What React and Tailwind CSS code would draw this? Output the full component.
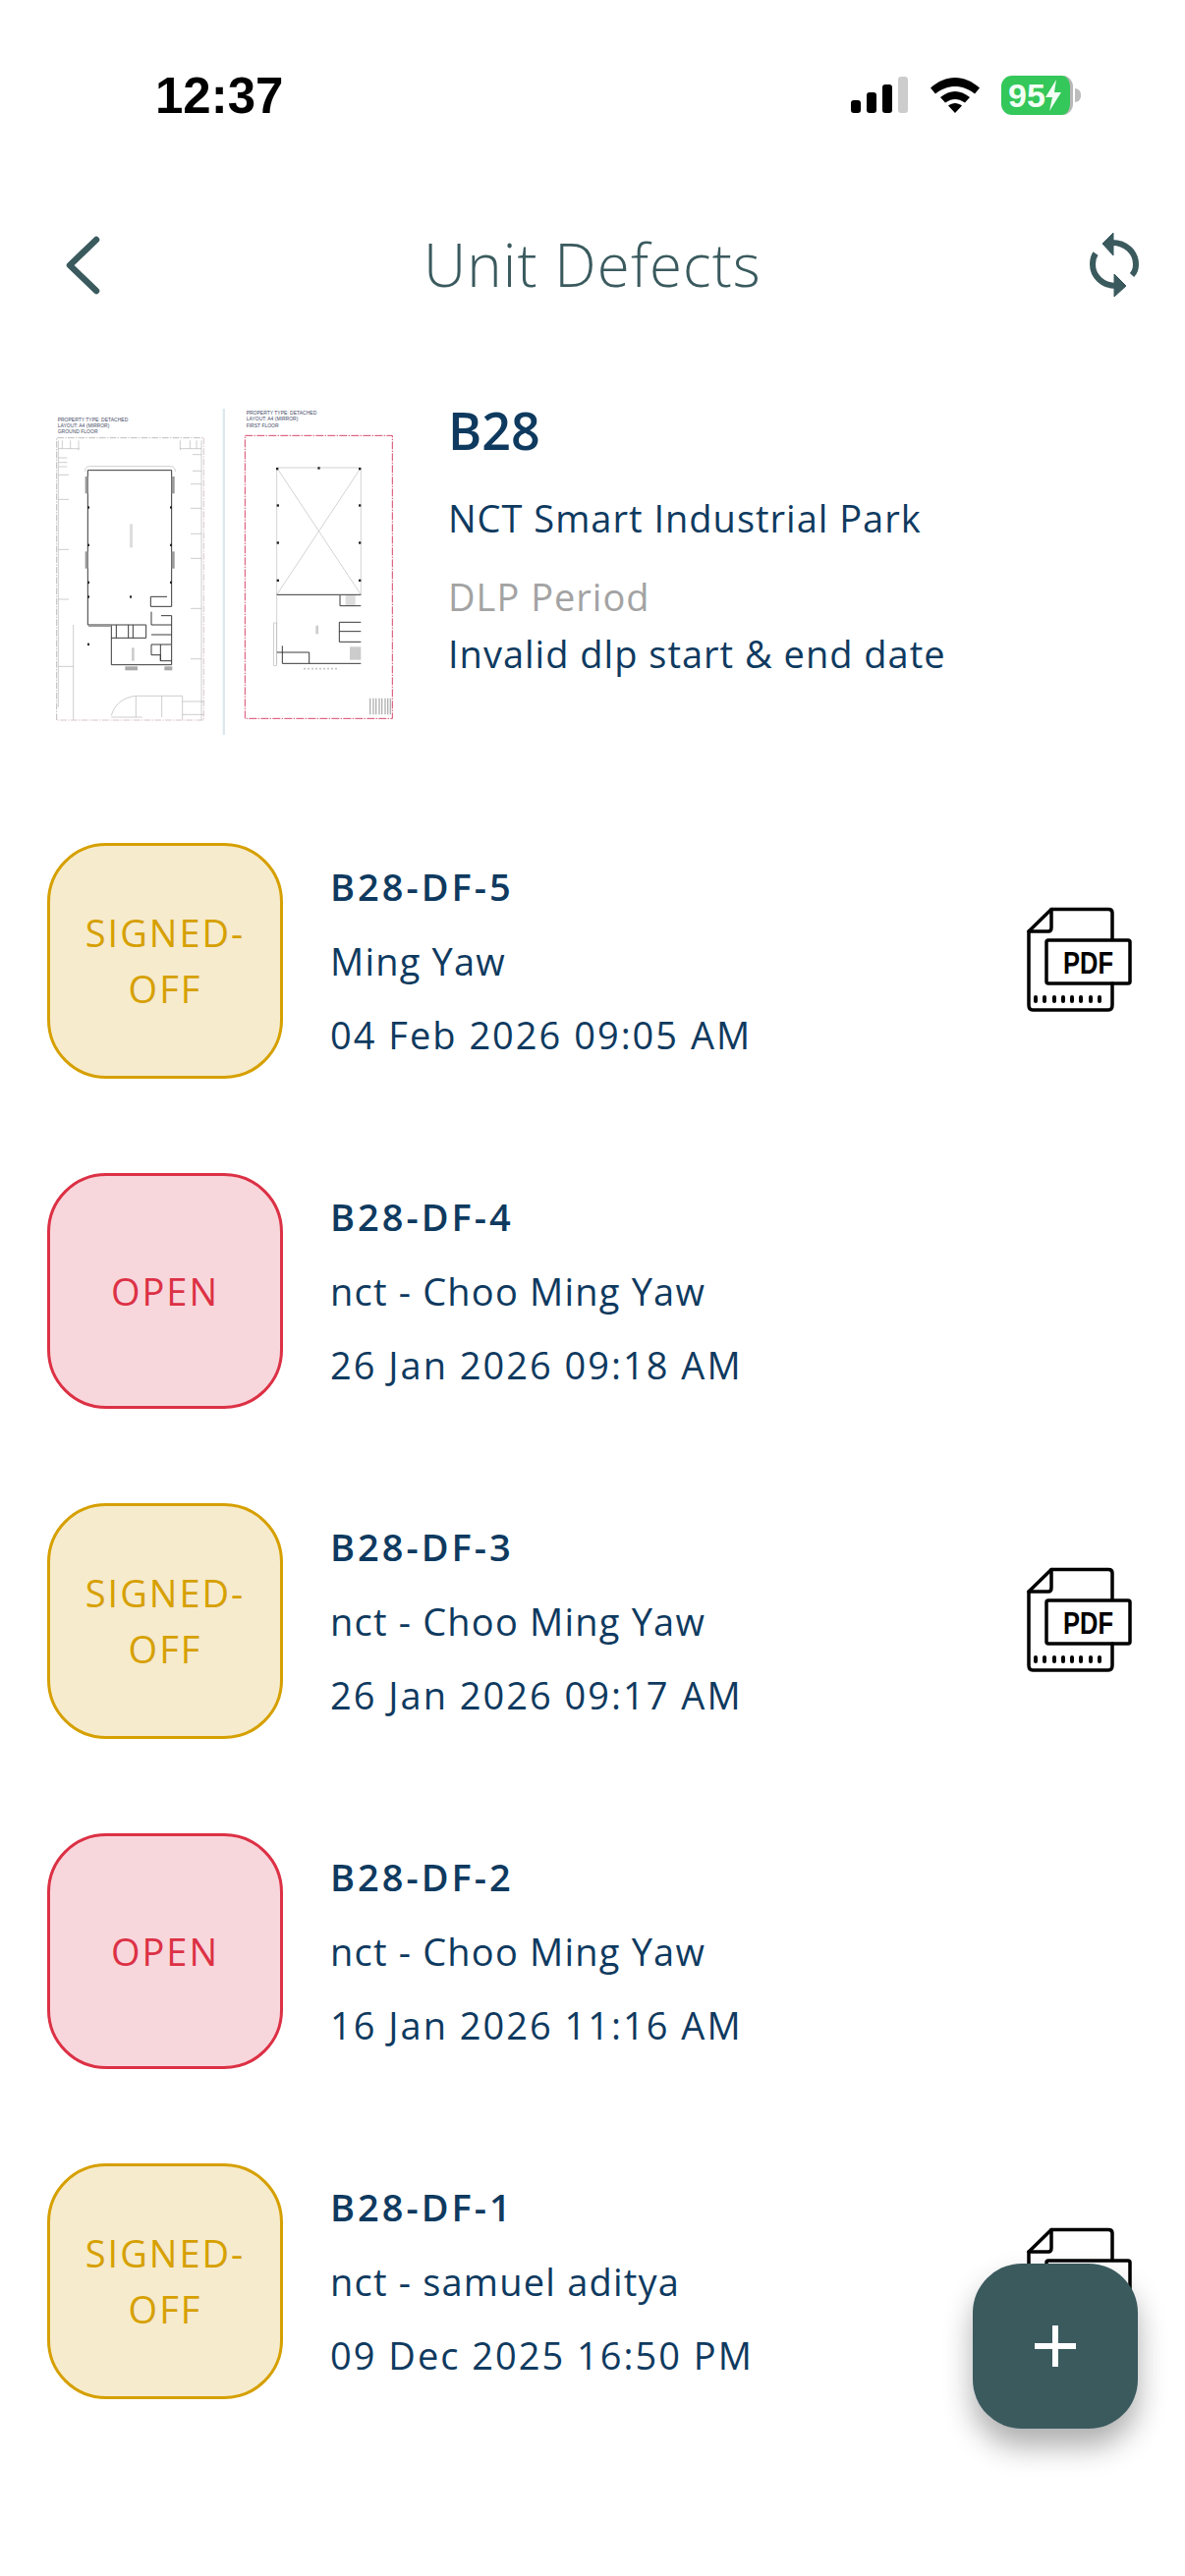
const DEFECTS = [
  { id: "B28-DF-5", name: "Ming Yaw", date: "04 Feb 2026 09:05 AM", signed: true },
  { id: "B28-DF-4", name: "nct - Choo Ming Yaw", date: "26 Jan 2026 09:18 AM", signed: false },
  { id: "B28-DF-3", name: "nct - Choo Ming Yaw", date: "26 Jan 2026 09:17 AM", signed: true },
  { id: "B28-DF-2", name: "nct - Choo Ming Yaw", date: "16 Jan 2026 11:16 AM", signed: false },
  { id: "B28-DF-1", name: "nct - samuel aditya", date: "09 Dec 2025 16:50 PM", signed: true },
];

function StatusIcons() {
  return (
    <div className="flex items-center">
      <svg width="58" height="38" viewBox="0 0 58 38">
        <rect x="0" y="24" width="10" height="13" rx="3" fill="#000" />
        <rect x="16" y="16" width="10" height="21" rx="3" fill="#000" />
        <rect x="32" y="8" width="10" height="29" rx="3" fill="#000" />
        <rect x="48" y="0" width="10" height="37" rx="3" fill="#ccc" />
      </svg>
      <svg width="50" height="38" viewBox="0 0 50 38" className="ml-[23px]">
        <path d="M25 1C16 1 8 4.500 0 11.500L5 17.500C11 12.500 18 10 25 10C32 10 39 12.500 45 17.500L50 11.500C42 4.500 34 1 25 1Z" fill="#000" />
        <path d="M25 15C20 15 15 17 10 21L15 26.500C19 24 22 23 25 23C28 23 31 24 35 26.500L40 21C35 17 30 15 25 15Z" fill="#000" />
        <path d="M25 27C23 27 20 28 18 29.500L25 37L32 29.500C30 28 27 27 25 27Z" fill="#000" />
      </svg>
      <div className="flex items-center ml-[22px]">
        <div className="w-[73px] h-[40px] rounded-[11px] bg-[#34c759] flex items-center pl-[7px] border-r-[3px] border-[#b8b8b8]">
          <span className="text-[#f2fff5] font-bold text-[34px] leading-none font-['Liberation_Sans',sans-serif]">95</span>
          <svg width="18" height="32" viewBox="0 0 18 32" className="-ml-[1px]">
            <path d="M12 0L1 18H8L5 32L17 13H10L12 0Z" fill="#f2fff5" />
          </svg>
        </div>
        <div className="w-[6px] h-[14px] bg-[#bdbdbd] rounded-r-full ml-[2px]" />
      </div>
    </div>
  );
}

function FloorPlan() {
  const grey = "#b5b5b5";
  const dark = "#3a3a3a";
  const red = "#d8486a";
  return (
    <svg width="400" height="360" viewBox="0 0 1200 1080" className="shrink-0">
      <rect x="590" y="48" width="7" height="996" fill="#dce8ee" />
      <g fontFamily="'Liberation Sans', sans-serif" fontSize="15" fill="#3f4a66">
        <text x="86" y="88">PROPERTY TYPE: DETACHED</text>
        <text x="86" y="106">LAYOUT: A4 (MIRROR)</text>
        <text x="86" y="124">GROUND FLOOR</text>
        <text x="662" y="67">PROPERTY TYPE: DETACHED</text>
        <text x="662" y="85">LAYOUT: A4 (MIRROR)</text>
        <text x="662" y="104">FIRST FLOOR</text>
      </g>
      {/* ground floor */}
      <path d="M83 999V137H532" fill="none" stroke="#bdbdbd" strokeWidth="3" strokeDasharray="20 4 4 4" />
      <path d="M532 137V999H83" fill="none" stroke="#d8c4c9" strokeWidth="3" strokeDasharray="20 4 4 4" />
      <path d="M88 145V960M525 145V998M88 170H152M460 170H525M100 145V170M125 145V170M150 145V175M460 145V175M490 145V170M510 145V170M88 198H115M88 212H115M88 225H115M88 250H120M88 325H120M88 478H120M88 630H120M88 835H134M134 708V998M498 188H525M498 238H525M492 278H525M492 352H525M492 430H525M492 505H525M492 658H525M492 812H525M250 985C260 950 285 930 325 925H467V998M325 925V990M404 925V990M250 990H344M467 942H532M467 982H532M170 240C170 228 175 224 185 224H430C440 224 445 228 445 240" fill="none" stroke={grey} strokeWidth="2" />
      <path d="M178 236H434V652M178 236V708H250V830H434V770M370 622H420M370 622V652H434M372 668V708H434M402 680H434V708M250 708H356V748H250M265 708V748M302 708V748M316 708V748M372 738H434M372 768H434M372 768V800H400V818H434M400 768V818M434 708V770" fill="none" stroke={dark} strokeWidth="3" />
      <rect x="170" y="255" width="9" height="52" fill="#999" />
      <rect x="434" y="255" width="9" height="52" fill="#999" />
      <rect x="170" y="484" width="9" height="52" fill="#999" />
      <rect x="434" y="484" width="9" height="52" fill="#999" />
      <rect x="180" y="705" width="70" height="9" fill="#999" />
      <rect x="292" y="835" width="38" height="12" fill="#aaa" />
      <rect x="412" y="835" width="24" height="12" fill="#aaa" />
      <rect x="306" y="400" width="9" height="72" fill="#ddd" />
      <rect x="312" y="778" width="8" height="40" fill="#ccc" />
      {/* first floor */}
      <rect x="658" y="130" width="450" height="864" fill="none" stroke={red} strokeWidth="3" strokeDasharray="24 4 4 4" />
      <path d="M755 228H1012V616M755 228V616M755 228L1012 616M1012 228L755 616M755 616V828" fill="none" stroke="#bdbdbd" strokeWidth="2" />
      <path d="M755 616H1012M948 618V650H1012M946 700H1012M946 700V760H1012M946 728H1012M755 792H854V826M772 772V826H1012" fill="none" stroke={dark} strokeWidth="3" />
      <rect x="746" y="702" width="9" height="130" fill="none" stroke="#bbb" strokeWidth="2" />
      <rect x="978" y="775" width="34" height="40" fill="#ccc" />
      <rect x="965" y="618" width="30" height="30" fill="#ddd" />
      <rect x="874" y="710" width="8" height="26" fill="#ccc" />
      <path d="M1040 932V982M1050 932V982M1058 932V982M1068 932V982M1076 932V982M1086 932V982M1094 932V982M1102 932V982" stroke="#b0b0b0" strokeWidth="4" />
      <path d="M838 842H940" stroke="#aaa" strokeWidth="5" strokeDasharray="4 8" />
      {[[756, 231], [883, 229], [1008, 231], [758, 343], [1008, 343], [758, 457], [1008, 457], [758, 572], [1008, 572]].map(([x, y]) => (
        <rect key={`${x}-${y}`} x={x - 3} y={y - 3} width="7" height="7" fill="#222" />
      ))}
      {[[180, 349], [432, 349], [180, 464], [432, 464], [180, 578], [432, 578], [180, 622], [309, 622], [180, 767]].map(([x, y]) => (
        <rect key={`${x}-${y}`} x={x - 3} y={y - 3} width="6" height="7" fill="#222" />
      ))}
    </svg>
  );
}

function PdfIcon() {
  return (
    <svg width="110" height="110" viewBox="0 0 110 110" fill="none" stroke="#000" strokeWidth="3.500" strokeLinejoin="round" strokeLinecap="round">
      <path d="M87 33V6C87 3.500 85.500 2.500 83 2.500H25L2 25V100C2 103 3.500 105 6 105H83C85.500 105 87 103.500 87 100V78" />
      <path d="M2 25H22C24.500 25 25 23.500 25 21V2.500" />
      <rect x="20" y="34" width="85" height="44" rx="2" />
      <path d="M9 92V96M18 92V96M28 92V96M37 92V96M46 92V96M55 92V96M65 92V96M74 92V96" strokeWidth="4" />
      <text x="62.500" y="68" textAnchor="middle" fontFamily="'Liberation Sans', sans-serif" fontWeight="700" fontSize="31" textLength="51" lengthAdjust="spacingAndGlyphs" fill="#000" stroke="none">PDF</text>
    </svg>
  );
}

function DefectRow({ item }) {
  return (
    <div className="flex items-center h-[240px] mb-[96px]">
      <div
        className={`w-[240px] h-[240px] shrink-0 rounded-[60px] border-[3px] flex items-center justify-center text-center text-[38px] leading-[57px] tracking-[2px] ${
          item.signed ? "bg-[#f6ebcd] border-[#d6a000] text-[#d6a000]" : "bg-[#f8d7dc] border-[#dc3145] text-[#dc3145]"
        }`}
      >
        {item.signed ? (
          <span>
            SIGNED-
            <br />
            OFF
          </span>
        ) : (
          <span>OPEN</span>
        )}
      </div>
      <div className="ml-[48px] flex-1 flex flex-col gap-[24px] text-[#0f3a5f] text-[38px] leading-[51px]">
        <p className="font-semibold tracking-[3px] -translate-y-px">{item.id}</p>
        <p className="tracking-[1.2px]">{item.name}</p>
        <p className="tracking-[2px]">{item.date}</p>
      </div>
      {item.signed && <PdfIcon />}
    </div>
  );
}

export default function App() {
  return (
    <div className="relative w-[1206px] h-[2622px] overflow-hidden bg-white font-['Open_Sans',sans-serif]">
      <div className="flex items-center justify-between pl-[158px] pr-[106px] pt-[72px] h-[122px]">
        <span className="text-[51px] leading-none font-bold text-black font-['Liberation_Sans',sans-serif]">12:37</span>
        <StatusIcons />
      </div>

      <header className="grid grid-cols-[1fr_auto_1fr] items-center px-[16px] mt-[98px] h-[100px]">
        <svg width="38" height="60" viewBox="0 0 38 60" fill="none" stroke="#3a5a5e" strokeWidth="6.500" strokeLinecap="round" strokeLinejoin="round" className="ml-[50px]">
          <path d="M32 4L5 30L32 56" />
        </svg>
        <h1 className="text-[60px] leading-none font-light tracking-[1.1px] text-[#3a5a5e] -translate-y-px">Unit Defects</h1>
        <svg width="100" height="100" viewBox="0 0 100 100" fill="none" stroke="#3a5a5e" strokeWidth="6" className="justify-self-end">
          <path d="M42 27C56 27 66 37 66 49C66 53 65 57 62 60" />
          <path d="M46 71C32 71 22 61 22 49C22 45 23 41 25 38" />
          <path d="M32 28L43 17V40Z" fill="#3a5a5e" strokeWidth="1" strokeLinejoin="round" />
          <path d="M56 71L44 59V82Z" fill="#3a5a5e" strokeWidth="1" strokeLinejoin="round" />
        </svg>
      </header>

      <section className="flex items-start pl-[30px] mt-[80px]">
        <FloorPlan />
        <div className="ml-[26px] pt-[6px] text-[#0f3a5f] text-[38px] tracking-[1px]">
          <p className="text-[52px] leading-[64px] font-semibold tracking-normal">B28</p>
          <p className="mt-[32px] leading-[50px]">NCT Smart Industrial Park</p>
          <p className="mt-[30px] leading-[50px] text-[#a3a3a3]">DLP Period</p>
          <p className="mt-[8px] leading-[50px]">Invalid dlp start &amp; end date</p>
        </div>
      </section>

      <main className="pl-[48px] pr-[51px] mt-[98px]">
        {DEFECTS.map((item) => (
          <DefectRow key={item.id} item={item} />
        ))}
      </main>

      <button className="absolute left-[990px] top-[2304px] w-[168px] h-[168px] rounded-[50px] bg-[#3a5a5e] flex items-center justify-center shadow-[0_18px_30px_rgba(0,0,0,0.32)]">
        <svg width="42" height="42" viewBox="0 0 42 42" fill="#fff">
          <rect x="18" y="0" width="6" height="42" />
          <rect x="0" y="18" width="42" height="6" />
        </svg>
      </button>
    </div>
  );
}
